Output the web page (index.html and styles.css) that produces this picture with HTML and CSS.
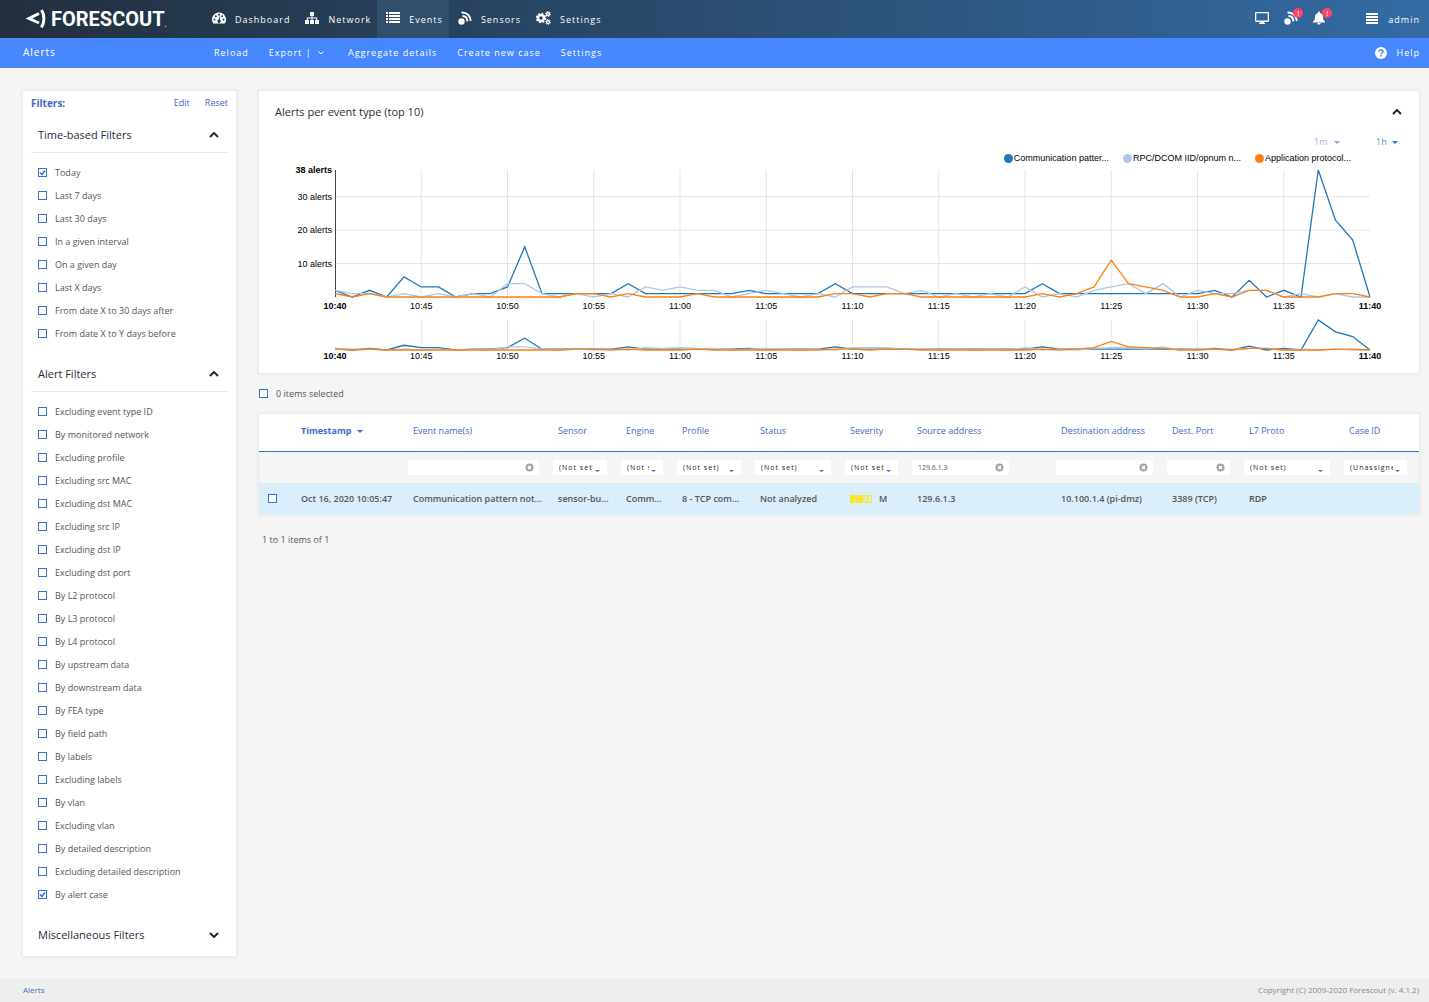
FILE: index.html
```html
<!DOCTYPE html>
<html lang="en">
<head>
 <meta charset="UTF-8">
 <meta name="viewport" content="width=device-width, initial-scale=1.0">
 <title>Alerts</title>
 <link rel="stylesheet" href="styles.css">
</head>
<body>
 <header class="topbar">
  <a href="#" class="logo">
   <svg class="logo-mark" width="22" height="20" viewBox="0 0 22 20" fill="none" stroke="#fff" stroke-width="3"><path d="M14 4.500L4 9.500l10 4.500"/><path d="M16.500 1c3.200 5 3.200 12.500 0 17.500"/></svg>
   <span class="logo-text">FORESCOUT</span><span class="logo-dot">.</span>
  </a>
  <nav class="nav">
   <a href="#" class="nav-item">
    <svg width="14" height="14" viewBox="0 0 14 14"><path fill="#fff" d="M7 1.500a7 7 0 0 0-7 7c0 1.400.4 2.700 1.100 3.800.1.200.3.200.4.200h11c.2 0 .3-.1.400-.2A7 7 0 0 0 7 1.500z"/><g fill="#24364b"><circle cx="2.500" cy="8.500" r="1"/><circle cx="3.800" cy="5.200" r="1"/><circle cx="7" cy="3.800" r="1"/><circle cx="10.200" cy="5.200" r="1"/><circle cx="11.500" cy="8.500" r="1"/><path d="M7.600 5.500l.9.200-.7 3.100a1.600 1.600 0 1 1-.9-.2z"/></g></svg>
    Dashboard
   </a>
   <a href="#" class="nav-item">
    <svg width="14" height="14" viewBox="0 0 14 14"><path fill="#fff" d="M5 1h4v4H7.500v1.500h4.700V9H14v4h-4V9h1.200V7.500H7.500V9H9v4H5V9h1.500V7.500H2.800V9H4v4H0V9h1.800V6.500h4.700V5H5z"/></svg>
    Network
   </a>
   <a href="#" class="nav-item active">
    <svg width="14" height="14" viewBox="0 0 14 14"><path fill="#fff" d="M0 1h2v2H0zm3 0h11v2H3zM0 4h2v2H0zm3 0h11v2H3zM0 7h2v2H0zm3 0h11v2H3zm-3 3h2v2H0zm3 0h11v2H3z"/></svg>
    Events
   </a>
   <a href="#" class="nav-item">
    <svg width="14" height="14" viewBox="0 0 14 14"><circle cx="3.500" cy="10.500" r="3.200" fill="#fff"/><path d="M4.500 5c3 0 4.800 2 4.800 5.500M3.500 1.500c5.500-.3 9 3.500 9.200 8.500" fill="none" stroke="#fff" stroke-width="1.800"/></svg>
    Sensors
   </a>
   <a href="#" class="nav-item">
    <svg width="15" height="14" viewBox="0 0 15 14" fill="none" stroke="#fff"><circle cx="5" cy="7" r="3" stroke-width="2.400"/><circle cx="5" cy="7" r="4.500" stroke-width="1.600" stroke-dasharray="1.800 1.730"/><circle cx="12" cy="3" r="1.500" stroke-width="1.400"/><circle cx="12" cy="3" r="2.500" stroke-width="1" stroke-dasharray="1.200 1.400"/><circle cx="12" cy="11" r="1.500" stroke-width="1.400"/><circle cx="12" cy="11" r="2.500" stroke-width="1" stroke-dasharray="1.200 1.400"/></svg>
    Settings
   </a>
  </nav>
  <div class="tools">
   <a href="#" class="tool" aria-label="Monitor">
    <svg width="14" height="14" viewBox="0 0 14 14"><path fill="#fff" fill-rule="evenodd" d="M1.200 1h11.600c.7 0 1.200.5 1.200 1.200v7.600c0 .7-.5 1.200-1.200 1.200H9v1h1v1H4v-1h1v-1H1.200C.5 11 0 10.500 0 9.800V2.200C0 1.500.5 1 1.200 1zm.1 1.300v7.200h11.400V2.300z"/></svg>
   </a>
   <a href="#" class="tool" aria-label="Sensor warnings">
    <svg width="14" height="14" viewBox="0 0 14 14"><circle cx="3.500" cy="10.500" r="3.200" fill="#fff"/><path d="M4.500 5c3 0 4.800 2 4.800 5.500M3.500 1.500c5.500-.3 9 3.500 9.200 8.500" fill="none" stroke="#fff" stroke-width="1.800"/></svg>
    <span class="badge">!</span>
   </a>
   <a href="#" class="tool" aria-label="Notifications">
    <svg width="12" height="14" viewBox="0 0 12 14"><path fill="#fff" d="M6 .5c.6 0 1 .4 1 1v.4c1.900.4 3 2 3 4 0 2.600.8 3.700 2 4.600v1H0v-1c1.200-.9 2-2 2-4.600 0-2 1.100-3.600 3-4v-.4c0-.6.400-1 1-1zM4.300 12h3.400c0 1-.8 1.600-1.700 1.600S4.300 13 4.300 12z"/></svg>
    <span class="badge">!</span>
   </a>
   <a href="#" class="tool user">
    <svg width="12" height="14" viewBox="0 0 12 14"><path fill="#fff" d="M0 2h12v2H0zm0 3h12v2H0zm0 3h12v2H0zm0 3h12v2H0z"/></svg>
    admin
   </a>
  </div>
 </header>

 <div class="subbar">
  <h1 class="page-title">Alerts</h1>
  <nav class="actions">
   <a href="#">Reload</a>
   <a href="#">Export | <svg class="export-arrow" width="6" height="4" viewBox="0 0 6 4"><path d="M.5.5L3 3 5.500.5" fill="none" stroke="#fff"/></svg></a>
   <a href="#">Aggregate details</a>
   <a href="#">Create new case</a>
   <a href="#">Settings</a>
  </nav>
  <a href="#" class="help">
   <svg width="12" height="12" viewBox="0 0 12 12"><circle cx="6" cy="6" r="6" fill="#fff"/><path d="M4 4.700C4 3.500 4.800 2.900 6 2.900s2 .7 2 1.700c0 1.400-1.800 1.300-1.800 2.700" fill="none" stroke="#4787ff" stroke-width="1.500"/><path d="M5.300 8.100h1.600v1.500H5.300z" fill="#4787ff"/></svg>
   Help
  </a>
 </div>

 <main class="page">
  <aside class="sidebar card">
   <div class="filters-head">
    <strong>Filters:</strong>
    <a href="#">Edit</a>
    <a href="#">Reset</a>
   </div>
   <h2 class="group-title">Time-based Filters <svg width="10" height="6" viewBox="0 0 10 6"><path d="M1 5l4-4 4 4" fill="none" stroke="#1f2d3d" stroke-width="2"/></svg></h2>
   <ul class="filter-list">
    <li><label><input type="checkbox" checked>Today</label></li>
    <li><label><input type="checkbox">Last 7 days</label></li>
    <li><label><input type="checkbox">Last 30 days</label></li>
    <li><label><input type="checkbox">In a given interval</label></li>
    <li><label><input type="checkbox">On a given day</label></li>
    <li><label><input type="checkbox">Last X days</label></li>
    <li><label><input type="checkbox">From date X to 30 days after</label></li>
    <li><label><input type="checkbox">From date X to Y days before</label></li>
   </ul>
   <h2 class="group-title">Alert Filters <svg width="10" height="6" viewBox="0 0 10 6"><path d="M1 5l4-4 4 4" fill="none" stroke="#1f2d3d" stroke-width="2"/></svg></h2>
   <ul class="filter-list">
    <li><label><input type="checkbox">Excluding event type ID</label></li>
    <li><label><input type="checkbox">By monitored network</label></li>
    <li><label><input type="checkbox">Excluding profile</label></li>
    <li><label><input type="checkbox">Excluding src MAC</label></li>
    <li><label><input type="checkbox">Excluding dst MAC</label></li>
    <li><label><input type="checkbox">Excluding src IP</label></li>
    <li><label><input type="checkbox">Excluding dst IP</label></li>
    <li><label><input type="checkbox">Excluding dst port</label></li>
    <li><label><input type="checkbox">By L2 protocol</label></li>
    <li><label><input type="checkbox">By L3 protocol</label></li>
    <li><label><input type="checkbox">By L4 protocol</label></li>
    <li><label><input type="checkbox">By upstream data</label></li>
    <li><label><input type="checkbox">By downstream data</label></li>
    <li><label><input type="checkbox">By FEA type</label></li>
    <li><label><input type="checkbox">By field path</label></li>
    <li><label><input type="checkbox">By labels</label></li>
    <li><label><input type="checkbox">Excluding labels</label></li>
    <li><label><input type="checkbox">By vlan</label></li>
    <li><label><input type="checkbox">Excluding vlan</label></li>
    <li><label><input type="checkbox">By detailed description</label></li>
    <li><label><input type="checkbox">Excluding detailed description</label></li>
    <li><label><input type="checkbox" checked>By alert case</label></li>
   </ul>
   <h2 class="group-title closed">Miscellaneous Filters <svg width="10" height="6" viewBox="0 0 10 6"><path d="M1 1l4 4 4-4" fill="none" stroke="#1f2d3d" stroke-width="2"/></svg></h2>
  </aside>

  <div class="content">
   <section class="card chart-card">
    <div class="chart-head">
     <h2>Alerts per event type (top 10)</h2>
     <svg width="10" height="6" viewBox="0 0 10 6"><path d="M1 5l4-4 4 4" fill="none" stroke="#1f2d3d" stroke-width="2"/></svg>
    </div>
    <div class="chart-range">
     <select class="resolution" aria-label="Resolution" disabled><option>1m</option></select>
     <select aria-label="Time span"><option>1h</option></select>
    </div>
    <div class="legend">
     <span class="legend-item series-a">Communication patter...</span>
     <span class="legend-item series-b">RPC/DCOM IID/opnum n...</span>
     <span class="legend-item series-c">Application protocol...</span>
    </div>
    <svg id="chart" class="chart"></svg>
   </section>

   <label class="selected-info"><input type="checkbox">0 items selected</label>

   <table class="alerts card">
    <colgroup>
     <col class="c-check"><col class="c-time"><col class="c-name"><col class="c-sensor"><col class="c-engine"><col class="c-profile"><col class="c-status"><col class="c-severity"><col class="c-source"><col class="c-dest"><col class="c-port"><col class="c-proto"><col class="c-case">
    </colgroup>
    <thead>
     <tr>
      <th></th>
      <th class="sorted">Timestamp <svg width="6" height="3" viewBox="0 0 6 3"><path d="M0 0h6L3 3z" fill="#3b6fd1"/></svg></th>
      <th>Event name(s)</th>
      <th>Sensor</th>
      <th>Engine</th>
      <th>Profile</th>
      <th>Status</th>
      <th>Severity</th>
      <th>Source address</th>
      <th>Destination address</th>
      <th>Dest. Port</th>
      <th>L7 Proto</th>
      <th>Case ID</th>
     </tr>
    </thead>
    <tbody>
     <tr class="filter-row">
      <td></td>
      <td></td>
      <td><div class="text-filter"><input type="text" aria-label="Event name filter"><button type="button" class="clear" aria-label="Clear"></button></div></td>
      <td><select aria-label="Sensor filter"><option>(Not set)</option></select></td>
      <td><select aria-label="Engine filter"><option>(Not set)</option></select></td>
      <td><select aria-label="Profile filter"><option>(Not set)</option></select></td>
      <td><select aria-label="Status filter"><option>(Not set)</option></select></td>
      <td><select aria-label="Severity filter"><option>(Not set)</option></select></td>
      <td><div class="text-filter"><input type="text" aria-label="Source address filter" value="129.6.1.3"><button type="button" class="clear" aria-label="Clear"></button></div></td>
      <td><div class="text-filter"><input type="text" aria-label="Destination address filter"><button type="button" class="clear" aria-label="Clear"></button></div></td>
      <td><div class="text-filter"><input type="text" aria-label="Port filter"><button type="button" class="clear" aria-label="Clear"></button></div></td>
      <td><select aria-label="Protocol filter"><option>(Not set)</option></select></td>
      <td><select aria-label="Case filter"><option>(Unassigned)</option></select></td>
     </tr>
     <tr class="alert-row">
      <td><input type="checkbox" aria-label="Select alert"></td>
      <td>Oct 16, 2020 10:05:47</td>
      <td>Communication pattern not...</td>
      <td>sensor-bu...</td>
      <td>Comm...</td>
      <td>8 - TCP com...</td>
      <td>Not analyzed</td>
      <td><svg class="severity" width="22" height="8" viewBox="0 0 22 8"><path fill="#f8e71c" d="M0 0h4v8H0zm4.500 0h4v8h-4zM9 0h4v8H9z"/><path fill="none" stroke="#f8e71c" d="M14 .5h3v7h-3zM18.500.5h3v7h-3z"/></svg>M</td>
      <td>129.6.1.3</td>
      <td>10.100.1.4 (pi-dmz)</td>
      <td>3389 (TCP)</td>
      <td>RDP</td>
      <td></td>
     </tr>
    </tbody>
   </table>
   <p class="pager">1 to 1 items of 1</p>
  </div>
 </main>

 <footer class="footer">
  <a href="#">Alerts</a>
  <span>Copyright (C) 2009-2020 Forescout (v. 4.1.2)</span>
 </footer>
 <script src="chart.js"></script>
</body>
</html>
```
FILE: styles.css
```css
* {
 box-sizing: border-box;
}
body {
 margin: 0;
 min-height: 100vh;
 display: flex;
 flex-direction: column;
 background: #f5f5f5;
 color: #555;
 font-family: "Open Sans", sans-serif;
 font-size: 9px;
 line-height: 15px;
}
a {
 color: #3f68c8;
 text-decoration: none;
}
h1, h2, p, ul {
 margin: 0;
 padding: 0;
}
svg {
 flex: none;
}

/* top bar */
.topbar {
 height: 38px;
 display: flex;
 align-items: center;
 padding: 0 9px 0 25px;
 background: linear-gradient(90deg, #222f3e, #336ba3);
 letter-spacing: 1px;
}
.topbar a {
 color: #fff;
}
.logo {
 display: flex;
 align-items: center;
 width: 178px;
 letter-spacing: 0;
}
.logo-text {
 margin-left: 4px;
 font: 700 20px/24px Roboto, sans-serif;
}
.logo-dot {
 padding-top: 8px;
}
.nav {
 display: flex;
 flex: 1;
 align-self: stretch;
}
.nav-item {
 display: flex;
 align-items: center;
 gap: 9px;
 padding: 0 6px 0 9px;
}
.nav-item svg {
 margin-bottom: 2px;
}
.nav-item.active {
 background: #314e6b;
}
.tools {
 display: flex;
 align-items: center;
 gap: 15px;
}
.tool {
 position: relative;
 display: flex;
 align-items: center;
}
.tool svg {
 margin-bottom: 2px;
}
.user {
 margin-left: 26px;
 gap: 10px;
}
.badge {
 position: absolute;
 top: -3px;
 left: 9px;
 width: 10px;
 height: 10px;
 border-radius: 50%;
 background: #ff4468;
 font-size: 8px;
 line-height: 10px;
 letter-spacing: 0;
 text-align: center;
}

/* blue bar */
.subbar {
 height: 30px;
 display: flex;
 align-items: center;
 padding: 0 9px 1px 23px;
 background: #4787ff;
 letter-spacing: 1px;
}
.subbar a {
 color: #fff;
}
.page-title {
 width: 191px;
 color: #fff;
 font-size: 10px;
 font-weight: 400;
}
.actions {
 display: flex;
 flex: 1;
 gap: 20px;
}
.export-arrow {
 margin: 0 4px 1px 3px;
}
.help {
 display: flex;
 align-items: center;
 gap: 10px;
}

/* layout */
.page {
 display: flex;
 align-items: flex-start;
 gap: 23px;
 padding: 23px 10px 23px 23px;
}
.card {
 background: #fff;
 box-shadow: 0 0 3px 1px #e6e6e6;
}
.content {
 flex: 1;
 min-width: 0;
}

/* filters */
.sidebar {
 flex: none;
 width: 213px;
 padding: 0 8px 4px;
}
.filters-head {
 display: flex;
 gap: 15px;
 padding-bottom: 2px;
 line-height: 24px;
}
.filters-head strong {
 flex: 1;
 color: #3f68c8;
 font-size: 10px;
}
.group-title {
 display: flex;
 align-items: center;
 justify-content: space-between;
 padding: 0 9px 0 7px;
 border-bottom: 1px solid #e8e8e8;
 color: #1f2d3d;
 font-size: 11px;
 font-weight: 500;
 line-height: 35px;
}
.group-title.closed {
 border-bottom: none;
}
.filter-list {
 padding: 8px 7px 11px;
 list-style: none;
}
.filter-list label {
 display: flex;
 align-items: center;
 gap: 8px;
 line-height: 23px;
}
input[type="checkbox"] {
 appearance: none;
 flex: none;
 width: 9px;
 height: 9px;
 margin: 0;
 border: 1px solid #3b6fd1;
 background: #fff;
}
input[type="checkbox"]:checked {
 background: #fff url("data:image/svg+xml,%3Csvg xmlns='http://www.w3.org/2000/svg' viewBox='0 0 7 7'%3E%3Cpath d='M1 3.500l2 2L6 1.500' fill='none' stroke='%233b6fd1' stroke-width='1.500'/%3E%3C/svg%3E");
}

/* chart */
.chart-head {
 display: flex;
 align-items: center;
 justify-content: space-between;
 padding: 0 17px 0 16px;
 line-height: 42px;
}
.chart-head h2 {
 color: #1f2d3d;
 font-size: 11px;
 font-weight: 500;
}
select {
 appearance: none;
 border: none;
 border-radius: 0;
 color: #222;
 font-family: inherit;
 letter-spacing: 1px;
}
.chart-range {
 display: flex;
 align-items: center;
 justify-content: flex-end;
 gap: 36px;
 height: 18px;
 padding-right: 21px;
}
.chart-range select {
 width: 22px;
 height: 18px;
 padding: 0;
 background: url("data:image/svg+xml,%3Csvg xmlns='http://www.w3.org/2000/svg' width='6' height='3'%3E%3Cpath d='M0 0h6L3 3z' fill='%233b6fd1'/%3E%3C/svg%3E") no-repeat right 8px;
 color: #5b86d6;
 font-size: 9px;
 letter-spacing: 0;
 line-height: 18px;
}
.chart-range .resolution {
 width: 26px;
 opacity: 0.6;
}
.legend {
 display: flex;
 justify-content: flex-end;
 gap: 14px;
 height: 15px;
 padding-right: 68px;
 color: #000;
 font-family: "Liberation Sans", Arial, sans-serif;
}
.legend-item {
 display: flex;
 align-items: center;
 gap: 1px;
}
.legend-item::before {
 content: "";
 width: 9px;
 height: 9px;
 border-radius: 50%;
 background: #1f77b4;
}
.series-b::before {
 background: #aec7e8;
}
.series-c::before {
 background: #ff7f0e;
}
.chart {
 display: block;
 width: 100%;
 height: 207px;
 font-family: "Liberation Sans", Arial, sans-serif;
}
.chart .max {
 font-weight: 700;
}
.chart .grid {
 stroke: #e5e5e5;
}
.chart .axis {
 stroke: #444;
}
.chart .line {
 fill: none;
 stroke-width: 1.3;
}

/* alerts table */
.selected-info {
 display: flex;
 align-items: center;
 gap: 8px;
 height: 41px;
 padding-bottom: 1px;
}
.alerts {
 width: 100%;
 table-layout: fixed;
 border-collapse: collapse;
}
.c-check { width: 30px; }
.c-time { width: 112px; }
.c-name { width: 145px; }
.c-sensor { width: 68px; }
.c-engine { width: 56px; }
.c-profile { width: 78px; }
.c-status { width: 90px; }
.c-severity { width: 67px; }
.c-source { width: 144px; }
.c-dest { width: 111px; }
.c-port { width: 77px; }
.c-proto { width: 100px; }
.c-case { width: 82px; }
.alerts th,
.alerts td {
 padding: 0 0 0 12px;
 text-align: left;
 white-space: nowrap;
}
.alerts th {
 height: 37px;
 padding-bottom: 3px;
 border-bottom: 1px solid #3b6fd1;
 color: #3f68c8;
 font-weight: 400;
}
.alerts th.sorted {
 font-weight: 700;
}
.sorted svg {
 margin: 0 0 1px 3px;
}
.alerts .filter-row td {
 height: 32px;
 padding: 0 7px;
 background: #f5f5f5;
}
.alerts .filter-row td:last-child {
 padding-right: 12px;
}
.alerts .alert-row td {
 height: 31px;
 padding-bottom: 1px;
 background: #dbeefb;
 color: #555;
 font-weight: 600;
}
.alerts .alert-row td:first-child {
 padding-left: 9px;
}
.alert-row input {
 display: block;
}
.filter-row select {
 display: block;
 width: 100%;
 height: 15px;
 padding: 0 14px 0 6px;
 background: #fff url("data:image/svg+xml,%3Csvg xmlns='http://www.w3.org/2000/svg' width='5' height='2'%3E%3Cpath d='M0 0h5L2.500 2z' fill='%233b6fd1'/%3E%3C/svg%3E") no-repeat right 7px top 10px;
 font-size: 7px;
}
.text-filter {
 display: flex;
 align-items: center;
 height: 15px;
 padding: 0 5px 0 6px;
 background: #fff;
}
.filter-row td:nth-child(9) .text-filter {
 width: 97px;
}
.text-filter input {
 flex: 1;
 min-width: 0;
 padding: 0;
 border: none;
 color: #555;
 background: none;
 font-family: inherit;
 font-size: 7px;
}
.clear {
 width: 9px;
 height: 9px;
 padding: 0;
 border: none;
 background: url("data:image/svg+xml,%3Csvg xmlns='http://www.w3.org/2000/svg' viewBox='0 0 9 9'%3E%3Ccircle cx='4.500' cy='4.500' r='4' fill='%23a3a3a3'/%3E%3Cpath d='M3 3l3 3M6 3L3 6' stroke='%23fff' stroke-width='1.400'/%3E%3C/svg%3E");
}
.severity {
 margin-right: 7px;
 vertical-align: -1px;
}
.pager {
 padding: 18px 3px;
}

/* footer */
.footer {
 display: flex;
 align-items: center;
 justify-content: space-between;
 height: 23px;
 margin-top: auto;
 padding: 0 10px 2px 23px;
 background: #eee;
 color: #888;
 font-size: 8px;
}
```
FILE: chart.js
```javascript
// alerts per minute, 10:40 - 11:40
const series = [
 { color: '#1f77b4', values: [2,0,2,0,6,3,3,0,1,1,3,15,1,1,1,1,1,4,1,1,1,1,1,1,2,1,1,1,1,4,1,1,1,1,1,1,1,1,1,1,1,4,1,1,1,1,1,1,1,1,1,2,0,5,0,2,0,38,23,17,0] },
 { color: '#aec7e8', values: [2,1,1,0,1,0,1,0,1,0,4,4,1,0,1,0,1,0,3,2,3,2,2,0,1,2,1,0,1,0,3,3,3,1,2,0,1,0,1,0,3,0,1,0,2,3,4,1,4,0,2,1,1,2,2,0,1,0,1,0,0] },
 { color: '#ff7f0e', values: [1,0,1,0,0,0,0,0,0,0,0,0,0,0,1,1,0,1,0,0,0,1,0,0,0,0,0,0,0,1,1,0,1,1,0,0,0,0,0,0,0,1,0,1,3,11,4,3,2,0,0,1,0,2,2,0,0,0,1,1,0] }
];
const maxValue = 38;
const minutes = 60;
const left = 76;
const right = 49;

function timeLabel(m) {
 const t = 640 + m;
 return Math.floor(t / 60) + ':' + String(t % 60).padStart(2, '0');
}

function drawPlot(width, top, bottom, labelY, main) {
 const x = m => left + m * (width - left - right) / minutes;
 const y = v => bottom - v * (bottom - top) / maxValue;
 let out = '';
 for (let m = 0; m <= minutes; m += 5) {
  const edge = m === 0 || m === minutes;
  if (!edge) {
   out += `<line class="grid" x1="${x(m)}" x2="${x(m)}" y1="${top}" y2="${bottom}"/>`;
  }
  out += `<text class="${edge ? 'max' : ''}" x="${x(m)}" y="${labelY}" text-anchor="middle">${timeLabel(m)}</text>`;
 }
 if (main) {
  [10, 20, 30].forEach(v => {
   out += `<line class="grid" x1="${left}" x2="${width - right}" y1="${y(v)}" y2="${y(v)}"/>`;
   out += `<text x="${left - 3}" y="${y(v) + 3}" text-anchor="end">${v} alerts</text>`;
  });
  out += `<text class="max" x="${left - 3}" y="${top + 3}" text-anchor="end">${maxValue} alerts</text>`;
  out += `<line class="axis" x1="${left + 0.5}" x2="${left + 0.5}" y1="${top}" y2="${bottom}"/>`;
 }
 series.forEach(s => {
  const points = s.values.map((v, i) => x(i) + ',' + y(v)).join(' ');
  out += `<polyline class="line" stroke="${s.color}" points="${points}"/>`;
 });
 return out;
}

function drawChart() {
 const chart = document.getElementById('chart');
 const width = chart.clientWidth;
 chart.innerHTML =
  drawPlot(width, 4, 131, 143, true) +
  drawPlot(width, 154, 184, 193, false);
}

drawChart();
window.addEventListener('resize', drawChart);
```
